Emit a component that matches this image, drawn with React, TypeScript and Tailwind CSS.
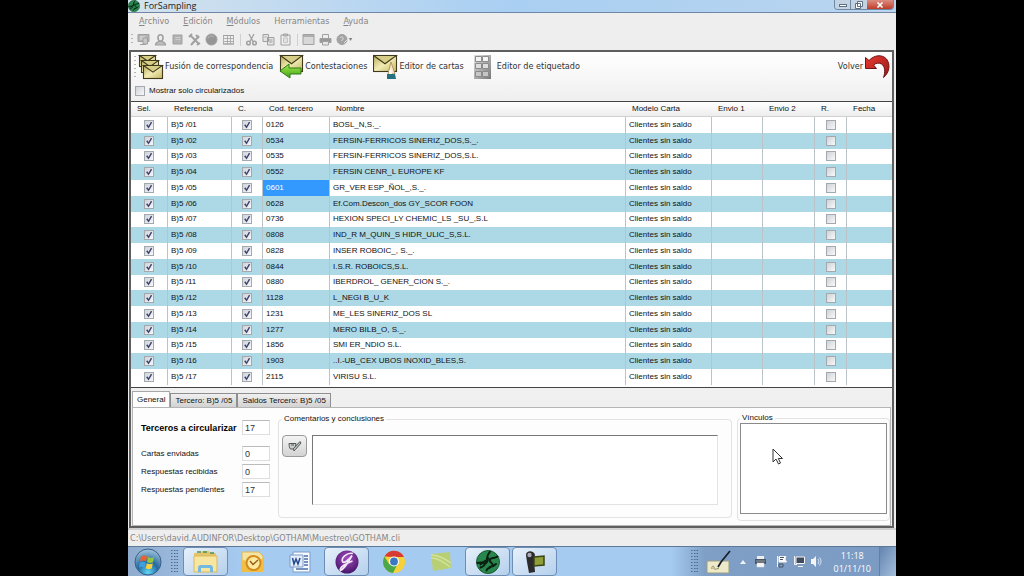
import { useState } from "react";
import type { ReactNode } from "react";

interface Row {
  ref: string;
  code: string;
  name: string;
}

const ROWS: Row[] = [
  { ref: "B)5 /01", code: "0126", name: "BOSL_N,S._." },
  { ref: "B)5 /02", code: "0534", name: "FERSIN-FERRICOS SINERIZ_DOS,S._." },
  { ref: "B)5 /03", code: "0535", name: "FERSIN-FERRICOS SINERIZ_DOS,S.L." },
  { ref: "B)5 /04", code: "0552", name: "FERSIN CENR_L EUROPE KF" },
  { ref: "B)5 /05", code: "0601", name: "GR_VER ESP_ÑOL_,S._." },
  { ref: "B)5 /06", code: "0628", name: "Ef.Com.Descon_dos GY_SCOR FOON" },
  { ref: "B)5 /07", code: "0736", name: "HEXION SPECI_LY CHEMIC_LS _SU_,S.L" },
  { ref: "B)5 /08", code: "0808", name: "IND_R M_QUIN_S HIDR_ULIC_S,S.L." },
  { ref: "B)5 /09", code: "0828", name: "INSER ROBOIC_, S._." },
  { ref: "B)5 /10", code: "0844", name: "I.S.R. ROBOICS,S.L." },
  { ref: "B)5 /11", code: "0880", name: "IBERDROL_ GENER_CION S._." },
  { ref: "B)5 /12", code: "1128", name: "L_NEGI B_U_K" },
  { ref: "B)5 /13", code: "1231", name: "ME_LES SINERIZ_DOS SL" },
  { ref: "B)5 /14", code: "1277", name: "MERO BILB_O, S._." },
  { ref: "B)5 /15", code: "1856", name: "SMI ER_NDIO S.L." },
  { ref: "B)5 /16", code: "1903", name: "..I.-UB_CEX UBOS INOXID_BLES,S." },
  { ref: "B)5 /17", code: "2115", name: "VIRISU S.L." },
];

const COLUMNS = [
  { label: "Sel.", width: "w-[37px]" },
  { label: "Referencia", width: "w-16" },
  { label: "C.", width: "w-[31px]" },
  { label: "Cod. tercero", width: "w-[67px]" },
  { label: "Nombre", width: "" },
  { label: "Modelo Carta", width: "w-[86px]" },
  { label: "Envio 1", width: "w-[51px]" },
  { label: "Envio 2", width: "w-[52px]" },
  { label: "R.", width: "w-8" },
  { label: "Fecha", width: "w-[45px]" },
];

const MENUS = ["Archivo", "Edición", "Módulos", "Herramientas", "Ayuda"];

const STATS = [
  { id: "enviadas", label: "Cartas enviadas", value: "0" },
  { id: "recibidas", label: "Respuestas recibidas", value: "0" },
  { id: "pendientes", label: "Respuestas pendientes", value: "17" },
];

const CELL = "border-r border-[#b9c3c8] px-[3px] whitespace-nowrap";

function Check({ label, initial = false, id }: { label?: string; initial?: boolean; id?: string }) {
  const [on, setOn] = useState(initial);
  return (
    <span className="relative block size-[10px] shrink-0">
      <input
        id={id}
        type="checkbox"
        aria-label={label}
        checked={on}
        onChange={() => setOn(!on)}
        className="block size-[10px] appearance-none border border-[#a3a9ae] bg-linear-to-br from-[#cfd3d8] to-[#f8f8f8]"
      />
      {on && (
        <svg viewBox="0 0 11 11" className="pointer-events-none absolute inset-0" fill="none">
          <path d="M3 5.2 5 8 8.3 2.4" stroke="#3d4373" strokeWidth="1.6" />
        </svg>
      )}
    </span>
  );
}

function Grip({ tall = false }: { tall?: boolean }) {
  return (
    <span
      className={`w-[2px] shrink-0 bg-[repeating-linear-gradient(to_bottom,#b4b4b4_0_1px,transparent_1px_4px)] ${tall ? "h-[22px]" : "h-3"}`}
    />
  );
}

function TaskGrip() {
  return (
    <svg width="7" height="24" viewBox="0 0 7 24" className="shrink-0">
      {[0, 3, 6, 9, 12, 15, 18, 21].map((y) => (
        <path key={y} d={`M0 ${y + 0.5}h1.5M3 ${y + 0.5}h1.5M5.5 ${y + 0.5}h1.5`} stroke="#4d6a91" />
      ))}
    </svg>
  );
}

function ToolIcon({ label, children }: { label: string; children: ReactNode }) {
  return (
    <button type="button" aria-label={label} className="shrink-0">
      <svg width="13" height="13" viewBox="0 0 13 13" fill="none" stroke="#a0a0a0">
        {children}
      </svg>
    </button>
  );
}

function Envelope({ x = 0, y = 0, w = 22, h = 15 }: { x?: number; y?: number; w?: number; h?: number }) {
  return (
    <g stroke="#3f3a1c" strokeWidth="1.1">
      <rect x={x + 0.5} y={y + 0.5} width={w} height={h} fill="url(#paper)" />
      <path d={`M${x + 0.5} ${y + 0.5}L${x + w / 2 + 0.5} ${y + h * 0.55}L${x + w + 0.5} ${y + 0.5}Z`} fill="#d6cd86" />
    </g>
  );
}

function Defs() {
  return (
    <svg width="0" height="0" className="absolute">
      <defs>
        <linearGradient id="paper" x1="0" y1="0" x2="1" y2="1">
          <stop offset="0" stopColor="#b9ac5a" />
          <stop offset="0.5" stopColor="#f2ecb4" />
          <stop offset="1" stopColor="#c2b563" />
        </linearGradient>
        <linearGradient id="arrow" x1="0" y1="0" x2="0" y2="1">
          <stop offset="0" stopColor="#a6f04a" />
          <stop offset="1" stopColor="#3f9d1a" />
        </linearGradient>
        <linearGradient id="back" x1="0" y1="0" x2="1" y2="1">
          <stop offset="0" stopColor="#e8372f" />
          <stop offset="1" stopColor="#9b1b1b" />
        </linearGradient>
        <linearGradient id="steel" x1="0" y1="0" x2="1" y2="1">
          <stop offset="0" stopColor="#e2e2e2" />
          <stop offset="1" stopColor="#777" />
        </linearGradient>
        <radialGradient id="orb" cx="0.5" cy="0.9" r="0.9">
          <stop offset="0" stopColor="#5fd8f6" />
          <stop offset="0.45" stopColor="#25699f" />
          <stop offset="1" stopColor="#a8c7de" />
        </radialGradient>
        <radialGradient id="violet" cx="0.5" cy="0.35" r="0.7">
          <stop offset="0" stopColor="#a64fc0" />
          <stop offset="1" stopColor="#3f1263" />
        </radialGradient>
      </defs>
    </svg>
  );
}

function AppLogo({ size }: { size: number }) {
  return (
    <svg width={size} height={size} viewBox="0 0 24 24" className="shrink-0">
      <circle cx="12" cy="12" r="11.5" fill="#27874c" stroke="#1b5c35" />
      <path
        d="M14 1.5c-2 3-3.5 5-3 8.5-2 1-4.5 2-6.5 4.5M1.5 13c3-1 5.5-.5 7 1 2-1 3.500-3 3.500-6M14 9c2-1.500 5-.5 7.500-2.500M14 10c-1.500 2 3.500 3 2.500 5.500s-5 1.500-6 5M20 14c-2 2-4 3-6.500 3M4.500 17.500c1.500-.5 3-1 4-2.500"
        fill="none"
        stroke="#0b1e12"
        strokeWidth="2"
        strokeLinecap="round"
      />
    </svg>
  );
}

function TitleBar() {
  return (
    <header className="flex h-[13px] items-start justify-between overflow-hidden border-b border-[#6f87a5] bg-linear-to-r from-[#d3e2ee] via-[#a9cff2] to-[#b9d5ef]">
      <div className="flex items-center gap-1">
        <AppLogo size={12} />
        <h1 className="font-['Open_Sans',sans-serif] text-[9px] leading-3 text-[#222]">ForSampling</h1>
      </div>
      <div className="mr-[2px] flex h-[10px] overflow-hidden rounded-b border border-t-0 border-[#7088a2]">
        <button type="button" aria-label="Minimizar" className="flex w-4 items-end justify-center border-r border-[#7088a2] bg-[#c3d3e3] pb-[2px]">
          <span className="h-[3px] w-2 border border-[#5d6f83] bg-white" />
        </button>
        <button type="button" aria-label="Restaurar" className="flex w-4 items-center justify-center bg-[#c3d3e3]">
          <svg width="8" height="8" viewBox="0 0 8 8" fill="#fff" stroke="#5d6f83">
            <path d="M2.5.5h5v5h-5zM.5 2.5h5v5h-5z" />
          </svg>
        </button>
        <button type="button" aria-label="Cerrar" className="flex w-[26px] items-center justify-center bg-linear-to-b from-[#dc8d80] to-[#bd3a28]">
          <svg width="8" height="6" viewBox="0 0 8 6" stroke="#fff" strokeWidth="1.6">
            <path d="M1.5.5 6.5 5.5M6.5.5 1.5 5.5" />
          </svg>
        </button>
      </div>
    </header>
  );
}

function MenuBar() {
  return (
    <nav className="flex h-[18px] items-center gap-[14px] pl-[11px] font-['DejaVu_Sans_Condensed','DejaVu_Sans',sans-serif] text-[9px] text-[#858585]">
      {MENUS.map((menu) => (
        <button key={menu} type="button">
          {menu === "Herramientas" ? menu : (
            <>
              <span className="underline">{menu[0]}</span>
              {menu.slice(1)}
            </>
          )}
        </button>
      ))}
    </nav>
  );
}

function IconBar() {
  return (
    <div className="flex h-[19px] items-center gap-1 pb-[2px] pl-[3px]">
      <Grip />
      <ToolIcon label="Equipo">
        <path d="M1 1.5h11v7H1z" fill="#b5b5b5" />
        <path d="M3 4h5M3 6h3" stroke="#e6e6e6" />
        <path d="M6 5h4.5v6H6zM3 11.5h6" fill="#c8c8c8" />
      </ToolIcon>
      <ToolIcon label="Usuario">
        <path d="M4 4.5a2.5 2.8 0 0 1 5 0C9 7 8 8 6.5 8S4 7 4 4.5z" strokeWidth="1.6" />
        <path d="M1.5 12c0-2.500 2-3 3.500-3.500h3c1.500.5 3.500 1 3.500 3.500z" fill="#bdbdbd" strokeWidth="1.2" />
      </ToolIcon>
      <ToolIcon label="Cuaderno">
        <path d="M2 2h9v9H2z" fill="#b3b3b3" />
        <path d="M4.5 4.5h5M4.5 6.5h5" stroke="#ccc" />
      </ToolIcon>
      <ToolIcon label="Opciones">
        <path d="M2 2l9 9M11 3 3 12M1 4l3-3M8 2l3 3M9 12l3-2" strokeWidth="2" />
      </ToolIcon>
      <ToolIcon label="Web">
        <circle cx="6.5" cy="6.5" r="5.5" fill="#969696" />
        <path d="M3 5c2-3 4-2 6-1" stroke="#bbb" />
      </ToolIcon>
      <ToolIcon label="Tabla">
        <path d="M1.5 2.5h10v8.5h-10zM1.5 5.5h10M1.5 8.5h10M5.5 3v8M8.5 3v8" strokeWidth="0.8" />
        <path d="M1 2.5h11M1 11h11" />
      </ToolIcon>
      <span className="ml-px h-3 w-px bg-[#cfcfcf]" />
      <ToolIcon label="Cortar">
        <path d="M4 1 8 8.5M9 1 5 8.5" strokeWidth="1.3" />
        <circle cx="3.5" cy="10" r="1.8" strokeWidth="1.5" />
        <circle cx="9.5" cy="10" r="1.8" strokeWidth="1.5" />
      </ToolIcon>
      <ToolIcon label="Copiar">
        <path d="M1 1.5h5.5v7H1zM5.5 4.5H12v7.5H5.5z" fill="#e4e4e4" />
        <path d="M7 7h3.5M7 9h3.5M2.5 4h2" />
      </ToolIcon>
      <ToolIcon label="Pegar">
        <path d="M2 2h9v10H2zM4.5 1h4v2h-4z" />
        <path d="M4.5 5h4v4.5h-4z" fill="#e2e2e2" stroke="#c4c4c4" />
      </ToolIcon>
      <span className="ml-px h-3 w-px bg-[#cfcfcf]" />
      <ToolIcon label="Ventana">
        <path d="M1 1.500h11v10H1z" fill="#d8d8d8" />
        <path d="M1 3h11" strokeWidth="1.5" />
      </ToolIcon>
      <ToolIcon label="Imprimir">
        <path d="M3.5 5V1.5h6V5" fill="#eee" />
        <path d="M1 5.5h11v4H1z" fill="#989898" />
        <path d="M3.5 8.5h6v3.5h-6z" fill="#e6e6e6" />
      </ToolIcon>
      <ToolIcon label="Ayuda">
        <circle cx="6" cy="6.500" r="5" fill="#a3a3a3" />
        <path d="M4 5c1-2 4-1 3 1L5.5 8M8 10l4-4" stroke="#ddd" />
      </ToolIcon>
      <span className="-ml-1 text-[6px] text-[#777]">▾</span>
    </div>
  );
}

function ActionBar() {
  const button = "flex items-center gap-px whitespace-nowrap";
  return (
    <div className="flex h-[31px] items-center pr-[2px] pb-[2px] pl-[3px] font-['DejaVu_Sans_Condensed','DejaVu_Sans',sans-serif] text-[9px] text-[#333]">
      <Grip tall />
      <button type="button" className={`${button} ml-[2px]`}>
        <svg width="26" height="26" viewBox="0 0 26 26">
          <Envelope x={1} y={1} w={16} h={11} />
          <Envelope x={3} y={6} w={17} h={12} />
          <Envelope x={5} y={11} w={19} h={13} />
        </svg>
        Fusión de correspondencia
      </button>
      <button type="button" className={`${button} ml-[6px]`}>
        <svg width="25" height="26" viewBox="0 0 25 26">
          <Envelope x={1} y={1} w={22} h={16} />
          <path d="M1 17 10 10v4h12v6H11v4z" fill="url(#arrow)" stroke="#2c7a17" />
        </svg>
        Contestaciones
      </button>
      <button type="button" className={`${button} ml-[6px]`}>
        <svg width="25" height="26" viewBox="0 0 25 26">
          <Envelope x={0} y={1} w={23} h={16} />
          <path d="M18 8 22 20h-7z" fill="#f6e6c8" stroke="#a8874f" strokeWidth="0.8" />
          <path d="M14 20h8l1 5h-9z" fill="#27707f" />
          <path d="M16 20v-3l2-2 1 5z" fill="#fff" />
        </svg>
        Editor de cartas
      </button>
      <button type="button" className={`${button} ml-[10px]`}>
        <svg width="17" height="26" viewBox="0 0 17 26" className="mr-[5px]">
          <path d="M0 1h17v24H0z" fill="url(#steel)" />
          <g fill="#f4f4f4" stroke="#8b8b8b">
            <path d="M1.5 2.5h6v5h-6zM8.5 2.5h6v5h-6z" />
            <path d="M1.5 9.5h6v5h-6zM8.5 9.5h6v5h-6z" fill="#dedede" />
            <path d="M1.5 17.5h6v5h-6zM8.5 17.5h6v5h-6z" fill="#c6c6c6" />
          </g>
        </svg>
        Editor de etiquetado
      </button>
      <button type="button" className={`${button} ml-auto`}>
        Volver
        <svg width="26" height="26" viewBox="0 0 26 26">
          <path
            d="M1.5 3.5 5 6.5C10 1 18 0 22.5 5 27 11 25 19 19.5 23.5 21.5 18 21 12 17.5 10 15 8.5 12 9 9.5 11l3 3.5h-11z"
            fill="url(#back)"
            stroke="#6d1515"
          />
        </svg>
      </button>
    </div>
  );
}

function ThirdPartyTable() {
  return (
    <div className="min-h-0 flex-1 border-y border-[#444] bg-white pb-[2px]">
      <table className="h-full w-full table-fixed border-separate border-spacing-0 text-left text-[8px] leading-[14px] text-[#111]">
        <thead>
          <tr className="h-[15px] bg-linear-to-b from-white to-[#ececec]">
            {COLUMNS.map((col) => (
              <th key={col.label} className={`${col.width} border-b border-[#d0d0d0] px-[6px] font-normal whitespace-nowrap`}>
                {col.label}
              </th>
            ))}
          </tr>
        </thead>
        <tbody>
          {ROWS.map((row) => (
            <tr key={row.ref} className="even:bg-[#add8e6]">
              <td className={CELL}>
                <div className="flex justify-center"><Check initial label={`Sel. ${row.ref}`} /></div>
              </td>
              <td className={CELL}>{row.ref}</td>
              <td className={CELL}>
                <div className="flex justify-center"><Check initial label={`C. ${row.ref}`} /></div>
              </td>
              <td className={`${CELL} ${row.code === "0601" ? "bg-[#3399ff] text-white" : ""}`}>{row.code}</td>
              <td className={CELL}>{row.name}</td>
              <td className={CELL}>Clientes sin saldo</td>
              <td className={CELL} />
              <td className={CELL} />
              <td className={CELL}>
                <div className="flex justify-center"><Check label={`R. ${row.ref}`} /></div>
              </td>
              <td />
            </tr>
          ))}
        </tbody>
      </table>
    </div>
  );
}

function DetailPanel() {
  const field = "h-[15px] w-7 border border-[#dedede] border-t-[#bbb] bg-white px-[2px] text-[9px] text-[#333]";
  const tab = "h-[14px] border border-b-0 border-[#8f8f8f] bg-linear-to-b from-[#f0f0f0] to-[#d2d2d2] px-1 whitespace-nowrap";
  return (
    <section className="px-px text-[8px] leading-3 text-[#111]">
      <div role="tablist" className="flex h-[19px] items-end">
        <button type="button" role="tab" aria-selected="true" className="h-4 border border-b-0 border-[#a8a8a8] bg-white px-1">
          General
        </button>
        <button type="button" role="tab" aria-selected="false" className={tab}>Tercero: B)5 /05</button>
        <button type="button" role="tab" aria-selected="false" className={tab}>Saldos Tercero: B)5 /05</button>
      </div>
      <div className="flex items-stretch border border-[#b5b5b5] bg-[#fdfdfd] pt-[5px] pb-1 pl-2">
        <div className="flex w-[129px] shrink-0 flex-col gap-[3px] pt-[7px]">
          <div className="mb-2 flex items-center justify-between">
            <label htmlFor="circularizar" className="text-[9px] font-bold whitespace-nowrap text-black">
              Terceros a circularizar
            </label>
            <input id="circularizar" defaultValue="17" className={field} />
          </div>
          {STATS.map((stat) => (
            <div key={stat.id} className="flex items-center justify-between">
              <label htmlFor={stat.id}>{stat.label}</label>
              <input id={stat.id} defaultValue={stat.value} className={field} />
            </div>
          ))}
        </div>
        <fieldset className="mb-[3px] ml-2 flex-1 rounded-sm border border-[#e2e2e2] pr-[13px] pb-3 pl-[3px]">
          <legend className="px-[2px]">
            <label htmlFor="comentarios">Comentarios y conclusiones</label>
          </legend>
          <div className="flex gap-[5px] pt-[10px]">
            <button
              type="button"
              aria-label="Editar comentarios"
              className="flex h-[22px] w-[25px] shrink-0 items-center justify-center rounded-sm border border-[#9a9a9a] bg-linear-to-b from-[#f4f4f4] to-[#d3d3d3]"
            >
              <svg width="14" height="12" viewBox="0 0 14 12" fill="none" stroke="#555">
                <path d="M1 3.5h7L7 9H2.5C1.5 8 1 6 1 3.5z" fill="#c9d2cf" />
                <path d="M5.5 8.5 12 1.5l1 1.5L7.5 9.5 6 11z" fill="#b8c4be" />
                <path d="M3 5h3" />
              </svg>
            </button>
            <textarea
              id="comentarios"
              className="block h-[70px] min-w-0 flex-1 resize-none border border-[#e3e3e3] border-t-[#777] border-l-[#777] bg-white"
            />
          </div>
        </fieldset>
        <fieldset className="ml-[5px] w-[153px] shrink-0 rounded-sm border border-[#e2e2e2] px-[2px] pb-[5px]">
          <legend className="px-[2px] leading-[10px]">Vínculos</legend>
          <div className="h-[91px] border border-[#8a8a8a] bg-white" />
        </fieldset>
      </div>
    </section>
  );
}

function TaskButton({ label, active = false, children }: { label: string; active?: boolean; children: ReactNode }) {
  return (
    <button
      type="button"
      aria-label={label}
      className={`flex h-[29px] w-[45px] items-center justify-center rounded-sm ${active ? "border border-[#6e8db4] bg-linear-to-br from-[#e6f0fa] to-[#b5d0ec]" : ""}`}
    >
      {children}
    </button>
  );
}

function TaskBar() {
  return (
    <footer className="flex h-[30px] items-center border-t border-[#5d7899] bg-linear-to-r from-[#8fabcd] from-0% via-[#a6cbf1] via-15% to-[#a6cbf1] to-70%">
      <button type="button" aria-label="Inicio" className="ml-[6px]">
        <svg width="28" height="28" viewBox="0 0 28 28">
          <circle cx="14" cy="14" r="13" fill="url(#orb)" stroke="#365f8c" />
          <path d="M7 8.5c2-1.3 4-1.3 6 0l-1 5c-2-1.2-4-1.2-6 0z" fill="#e9622c" />
          <path d="M14 9c2 1.2 4 1.2 6 0l-1 5c-2 1.2-4 1.2-6 0z" fill="#93c83e" />
          <path d="M5.8 14.7c2-1.2 4-1.2 6 0l-1 5c-2-1.2-4-1.2-6 0z" fill="#3f9fe0" />
          <path d="M12.8 15.2c2 1.2 4 1.2 6 0l-1 5c-2 1.2-4 1.2-6 0z" fill="#fbd03b" />
        </svg>
      </button>
      <span className="mr-[5px] ml-[9px] flex"><TaskGrip /></span>
      <div className="flex gap-[2px]">
        <TaskButton label="Explorador" active>
          <svg width="26" height="24" viewBox="0 0 26 24">
            <path d="M1 3h7l1-2h7l1 2h6v18H1z" fill="#e3c468" />
            <path d="M4 2h4M10 2h4M17 3h4" stroke="#4c8f57" strokeWidth="1.5" />
            <path d="M1 6h23v16H1z" fill="#f7e6a2" stroke="#d9b95d" />
            <path d="M5 22v-4q0-3 3-3h9q3 0 3 3v4h-3v-4H8v4z" fill="#74b9e2" />
          </svg>
        </TaskButton>
        <TaskButton label="Correo">
          <svg width="25" height="24" viewBox="0 0 25 24">
            <path d="M2 2h17l4 4v14H2z" fill="#f4e3a2" stroke="#ddb755" />
            <path d="M1 9l12 5 10-6v14H1z" fill="#f2bf42" />
            <circle cx="13.5" cy="13" r="7" fill="#fce9a0" stroke="#d38a1c" strokeWidth="2" />
            <path d="M10 11l3 3.5 5-4.5" fill="none" stroke="#8d5a16" strokeWidth="1.3" />
          </svg>
        </TaskButton>
        <TaskButton label="Word">
          <svg width="22" height="22" viewBox="0 0 22 22">
            <path d="M4 1h17v20H4z" fill="#f7fafe" stroke="#7d9bc9" />
            <path d="M1 4h13v12H1z" fill="#e3ecf8" stroke="#7d9bc9" />
            <path d="M3.5 7l1.5 6 2-5 2 5 2-6" fill="none" stroke="#24498f" strokeWidth="1.5" />
            <path d="M15 5h4M15 8h4M15 11h4M15 14h4M7 18h12" stroke="#4a6ea9" strokeWidth="1.5" />
          </svg>
        </TaskButton>
        <TaskButton label="Gotham" active>
          <svg width="24" height="24" viewBox="0 0 24 24">
            <circle cx="12" cy="12" r="11.5" fill="url(#violet)" />
            <path
              d="M18 3.5C12 2 6 8 7.5 11.5c1.5 2.5 6-1 9.5-6C14 11 9 19 5.5 20.5c-2-2.5 6-7.5 12-9.5"
              fill="none"
              stroke="#f3e8f8"
              strokeWidth="1.7"
            />
          </svg>
        </TaskButton>
        <TaskButton label="Chrome">
          <svg width="24" height="24" viewBox="0 0 24 24">
            <circle cx="12" cy="12" r="11" fill="#f6d13a" />
            <path d="M2.5 6.5A11 11 0 0 1 22 7H12z" fill="#d93a31" />
            <path d="M2.5 6.5A11 11 0 0 0 11 23l4-8-8-1z" fill="#4aa84a" />
            <circle cx="12" cy="11.5" r="5" fill="#fff" />
            <circle cx="12" cy="11.5" r="3.9" fill="#3b78c2" />
          </svg>
        </TaskButton>
        <TaskButton label="Notas">
          <svg width="22" height="20" viewBox="0 0 22 20">
            <path d="M1 2 20 0l1 16-18 3z" fill="#b9cf74" />
            <path d="M1 3c7 0 13 3 20 8M1 6c6 0 13 4 19 9" stroke="#d3e29b" strokeWidth="1.5" fill="none" />
          </svg>
        </TaskButton>
        <TaskButton label="ForSampling" active>
          <AppLogo size={24} />
        </TaskButton>
        <TaskButton label="Grabador" active>
          <svg width="22" height="24" viewBox="0 0 22 24">
            <path d="M2 5c0-5 8-5 9 0l-1 5 1 12-6 1-2-11z" fill="#2b2b2b" />
            <circle cx="5.5" cy="5" r="2.2" fill="#aab" />
            <path d="M10 7l10-1v9l-10 1z" fill="#8f9e37" stroke="#3c4414" strokeWidth="1.5" />
          </svg>
        </TaskButton>
      </div>
      <div className="ml-auto flex h-full items-center bg-linear-to-r from-transparent via-[#7f9fc6] via-15% to-[#7b9bc4] pl-5">
        <TaskGrip />
        <svg width="26" height="24" viewBox="0 0 26 24" className="ml-2">
          <path d="M1 11h22v12H1z" fill="#eeeac9" stroke="#9aa081" />
          <path d="M6 19c-1-4 3-3 2-1s4 1 5 0" stroke="#8d8c55" fill="none" />
          <path d="M24 1 15 12l-3 5" stroke="#1b2030" strokeWidth="1.8" fill="none" />
        </svg>
        <svg width="6" height="4" viewBox="0 0 6 4" className="ml-2">
          <path d="M3 0 6 4H0z" fill="#eef4fb" />
        </svg>
        <svg width="13" height="13" viewBox="0 0 13 13" className="ml-2">
          <path d="M3 1h7v3H3z" fill="#eee" />
          <path d="M1 4h11v5H1z" fill="#4b5563" />
          <path d="M2 6h9M3 8h7v4H3z" fill="#f5f5f5" stroke="#ddd" strokeWidth="0.5" />
        </svg>
        <svg width="12" height="13" viewBox="0 0 12 13" className="ml-[9px]">
          <path d="M1.5 1v11M3 1.5h7L9 4l1.5 3H3z" fill="#fff" stroke="#f3f3f3" />
          <path d="M4 2.5h4M4 4.5h3M3 9h4v3H3z" stroke="#4b5563" fill="none" />
        </svg>
        <svg width="12" height="13" viewBox="0 0 12 13" className="ml-[5px]">
          <path d="M3 2h8.5v6.5H3z" fill="#3e4c5f" stroke="#f5f5f5" />
          <path d="M1.5 1v8M5 11.5h5M1 9.5h3" stroke="#f0f0f0" />
        </svg>
        <svg width="12" height="13" viewBox="0 0 12 13" className="ml-[5px]">
          <path d="M1 4h2l3-3v11L3 9H1z" fill="#f5f5f5" />
          <path d="M8 4c1 1.5 1 3.5 0 5M9.5 2.5c2 2 2 5.5 0 8" stroke="#dbe6f3" fill="none" />
        </svg>
        <div className="ml-3 text-center font-['Open_Sans',sans-serif] text-[9px] leading-[13px] text-white">
          <div>11:18</div>
          <div>01/11/10</div>
        </div>
        <button type="button" aria-label="Mostrar escritorio" className="ml-2 h-full w-[17px] border-l border-[#5f80ab] bg-linear-to-br from-[#6585b0] to-[#a5bfdc]" />
      </div>
    </footer>
  );
}

export default function App() {
  return (
    <div className="min-h-screen bg-black">
      <Defs />
      <div className="relative mx-auto flex h-screen max-w-3xl flex-col overflow-hidden bg-[#efeeee] font-['Liberation_Sans',sans-serif]">
        <TitleBar />
        <MenuBar />
        <IconBar />
        <main className="mr-[2px] ml-px flex min-h-0 flex-1 flex-col border-2 border-[#5f5f5f] bg-[#f0f0f0]">
          <div className="bg-linear-to-b from-white to-[#efefef]">
            <ActionBar />
            <div className="flex h-[18px] items-center gap-1 pb-[3px] pl-1 text-[8px] text-[#111]">
              <Check id="circularizados" />
              <label htmlFor="circularizados">Mostrar solo circularizados</label>
            </div>
          </div>
          <ThirdPartyTable />
          <DetailPanel />
        </main>
        <div className="border-t-2 border-[#cfcfcf] pl-[2px] font-['DejaVu_Sans_Condensed','DejaVu_Sans',sans-serif] text-[9px] leading-4 text-[#858585]">
          C:\Users\david.AUDINFOR\Desktop\GOTHAM\Muestreo\GOTHAM.cli
        </div>
        <TaskBar />
        <svg width="12" height="18" viewBox="0 0 12 18" className="pointer-events-none absolute top-[448px] right-[112px]">
          <path d="M1 1v13l3-3 2.5 5 2-1L6.3 10.5h4.2z" fill="#fff" stroke="#333" />
        </svg>
      </div>
    </div>
  );
}
